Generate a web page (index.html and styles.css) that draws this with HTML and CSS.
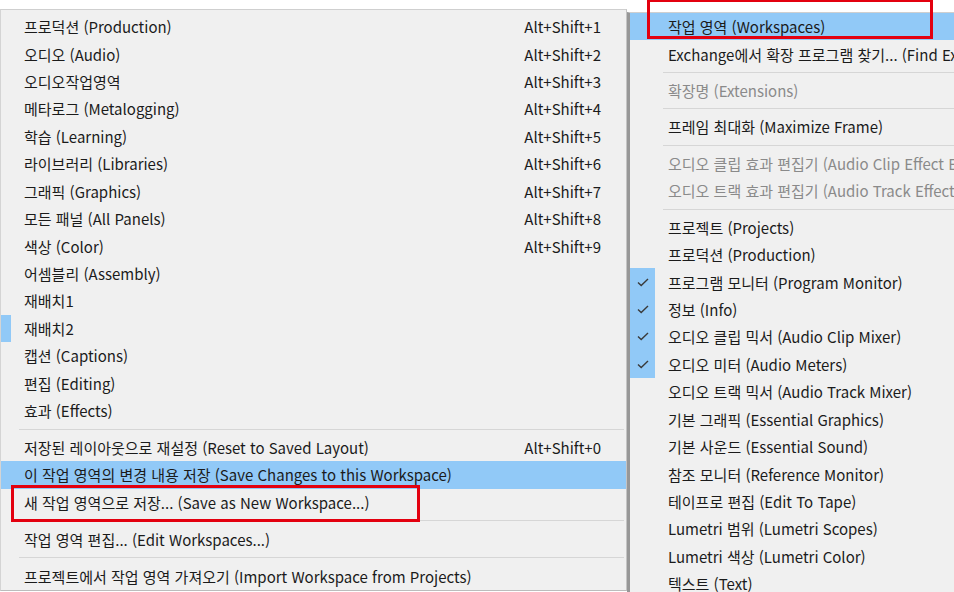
FILE: index.html
```html
<!DOCTYPE html>
<html lang="ko">
<head>
    <meta charset="UTF-8">
    <meta name="viewport" content="width=device-width, initial-scale=1.0">
    <title>작업 영역 메뉴</title>
    <link rel="stylesheet" href="styles.css">
</head>
<body>

    <div class="screen">

        <!-- Workspaces submenu -->
        <div class="menu menu-left">
            <div class="item"><span class="check"></span><span class="label">프로덕션 (Production)</span><span class="key">Alt+Shift+1</span></div>
            <div class="item"><span class="check"></span><span class="label">오디오 (Audio)</span><span class="key">Alt+Shift+2</span></div>
            <div class="item"><span class="check"></span><span class="label">오디오작업영역</span><span class="key">Alt+Shift+3</span></div>
            <div class="item"><span class="check"></span><span class="label">메타로그 (Metalogging)</span><span class="key">Alt+Shift+4</span></div>
            <div class="item"><span class="check"></span><span class="label">학습 (Learning)</span><span class="key">Alt+Shift+5</span></div>
            <div class="item"><span class="check"></span><span class="label">라이브러리 (Libraries)</span><span class="key">Alt+Shift+6</span></div>
            <div class="item"><span class="check"></span><span class="label">그래픽 (Graphics)</span><span class="key">Alt+Shift+7</span></div>
            <div class="item"><span class="check"></span><span class="label">모든 패널 (All Panels)</span><span class="key">Alt+Shift+8</span></div>
            <div class="item"><span class="check"></span><span class="label">색상 (Color)</span><span class="key">Alt+Shift+9</span></div>
            <div class="item"><span class="check"></span><span class="label">어셈블리 (Assembly)</span></div>
            <div class="item"><span class="check"></span><span class="label">재배치1</span></div>
            <div class="item checked"><span class="check"></span><span class="label">재배치2</span></div>
            <div class="item"><span class="check"></span><span class="label">캡션 (Captions)</span></div>
            <div class="item"><span class="check"></span><span class="label">편집 (Editing)</span></div>
            <div class="item"><span class="check"></span><span class="label">효과 (Effects)</span></div>
            <div class="separator"></div>
            <div class="item"><span class="check"></span><span class="label">저장된 레이아웃으로 재설정 (Reset to Saved Layout)</span><span class="key">Alt+Shift+0</span></div>
            <div class="item hover"><span class="check"></span><span class="label">이 작업 영역의 변경 내용 저장 (Save Changes to this Workspace)</span></div>
            <div class="item"><span class="check"></span><span class="label">새 작업 영역으로 저장... (Save as New Workspace...)</span></div>
            <div class="separator"></div>
            <div class="item"><span class="check"></span><span class="label">작업 영역 편집... (Edit Workspaces...)</span></div>
            <div class="separator"></div>
            <div class="item"><span class="check"></span><span class="label">프로젝트에서 작업 영역 가져오기 (Import Workspace from Projects)</span></div>
        </div>

        <!-- Window menu -->
        <div class="menu menu-right">
            <div class="item hover"><span class="check"></span><span class="label">작업 영역 (Workspaces)</span></div>
            <div class="item"><span class="check"></span><span class="label">Exchange에서 확장 프로그램 찾기... (Find Extensions on Exchange...)</span></div>
            <div class="separator"></div>
            <div class="item disabled"><span class="check"></span><span class="label">확장명 (Extensions)</span></div>
            <div class="separator"></div>
            <div class="item"><span class="check"></span><span class="label">프레임 최대화 (Maximize Frame)</span></div>
            <div class="separator"></div>
            <div class="item disabled"><span class="check"></span><span class="label">오디오 클립 효과 편집기 (Audio Clip Effect Editor)</span></div>
            <div class="item disabled"><span class="check"></span><span class="label">오디오 트랙 효과 편집기 (Audio Track Effect Editor)</span></div>
            <div class="separator"></div>
            <div class="item"><span class="check"></span><span class="label">프로젝트 (Projects)</span></div>
            <div class="item"><span class="check"></span><span class="label">프로덕션 (Production)</span></div>
            <div class="item checked"><span class="check"><svg viewBox="0 0 12 9" width="12" height="9"><path d="M1 4.5 L4.2 7.5 L11 1" fill="none" stroke="#3a3a3a" stroke-width="1.4"/></svg></span><span class="label">프로그램 모니터 (Program Monitor)</span></div>
            <div class="item checked"><span class="check"><svg viewBox="0 0 12 9" width="12" height="9"><path d="M1 4.5 L4.2 7.5 L11 1" fill="none" stroke="#3a3a3a" stroke-width="1.4"/></svg></span><span class="label">정보 (Info)</span></div>
            <div class="item checked"><span class="check"><svg viewBox="0 0 12 9" width="12" height="9"><path d="M1 4.5 L4.2 7.5 L11 1" fill="none" stroke="#3a3a3a" stroke-width="1.4"/></svg></span><span class="label">오디오 클립 믹서 (Audio Clip Mixer)</span></div>
            <div class="item checked"><span class="check"><svg viewBox="0 0 12 9" width="12" height="9"><path d="M1 4.5 L4.2 7.5 L11 1" fill="none" stroke="#3a3a3a" stroke-width="1.4"/></svg></span><span class="label">오디오 미터 (Audio Meters)</span></div>
            <div class="item"><span class="check"></span><span class="label">오디오 트랙 믹서 (Audio Track Mixer)</span></div>
            <div class="item"><span class="check"></span><span class="label">기본 그래픽 (Essential Graphics)</span></div>
            <div class="item"><span class="check"></span><span class="label">기본 사운드 (Essential Sound)</span></div>
            <div class="item"><span class="check"></span><span class="label">참조 모니터 (Reference Monitor)</span></div>
            <div class="item"><span class="check"></span><span class="label">테이프로 편집 (Edit To Tape)</span></div>
            <div class="item"><span class="check"></span><span class="label">Lumetri 범위 (Lumetri Scopes)</span></div>
            <div class="item"><span class="check"></span><span class="label">Lumetri 색상 (Lumetri Color)</span></div>
            <div class="item"><span class="check"></span><span class="label">텍스트 (Text)</span></div>
        </div>

        <!-- Red annotation boxes -->
        <div class="mark mark-save"></div>
        <div class="mark mark-workspaces"></div>
    </div>

</body>
</html>
```

FILE: styles.css
```css
* {
    margin: 0;
    padding: 0;
    box-sizing: border-box;
}

body {
    font-family: "Noto Sans CJK KR", "Noto Sans", sans-serif;
    font-size: 15px;
    color: #1b1b1b;
    background: #fff;
    overflow: hidden;
}

.screen {
    position: relative;
    display: flex;
    align-items: flex-start;
    width: 954px;
    height: 592px;
    overflow: hidden;
}

.menu {
    background-color: #f0f0f0;
}

.menu-left {
    width: 627px;
    flex-shrink: 0;
    margin-top: 9px;
    padding-top: 3px;
    border-top: 1px solid #cfcfcf;
    border-left: 1px solid #d4d4d4;
    border-right: 1px solid #c4c4c4;
    border-bottom: 1px solid #bcbcbc;
}

.menu-right {
    flex: 1;
    min-width: 0;
    height: 580px;
    margin-top: 12px;
    border-top: 1px solid #cfcfcf;
    border-left: 3px solid #979797;
    overflow: hidden;
}

.item {
    display: flex;
    align-items: center;
    height: 27.43px;
    white-space: nowrap;
    line-height: 1;
}

.item.hover {
    background-color: #91c9f7;
}

.item.disabled {
    color: #8a8a8a;
}

.check {
    display: flex;
    align-items: center;
    justify-content: center;
    align-self: stretch;
    flex-shrink: 0;
}

.menu-left .check {
    width: 10px;
}

.menu-right .check {
    width: 25px;
}

.item.checked .check {
    background-color: #91c9f7;
}

.label {
    padding-left: 13px;
}

.key {
    margin-left: auto;
    padding-right: 25px;
}

.separator {
    height: 1px;
    background-color: #d6d6d6;
}

.menu-left .separator {
    margin: 4.25px 2px 4.25px 18px;
}

.menu-right .separator {
    margin: 4px 0 4px 33px;
}

.mark {
    position: absolute;
    border: 3px solid #e3000f;
}

.mark-save {
    left: 11px;
    top: 485px;
    width: 409px;
    height: 37px;
}

.mark-workspaces {
    left: 647px;
    top: -1px;
    width: 286px;
    height: 40px;
}
```
